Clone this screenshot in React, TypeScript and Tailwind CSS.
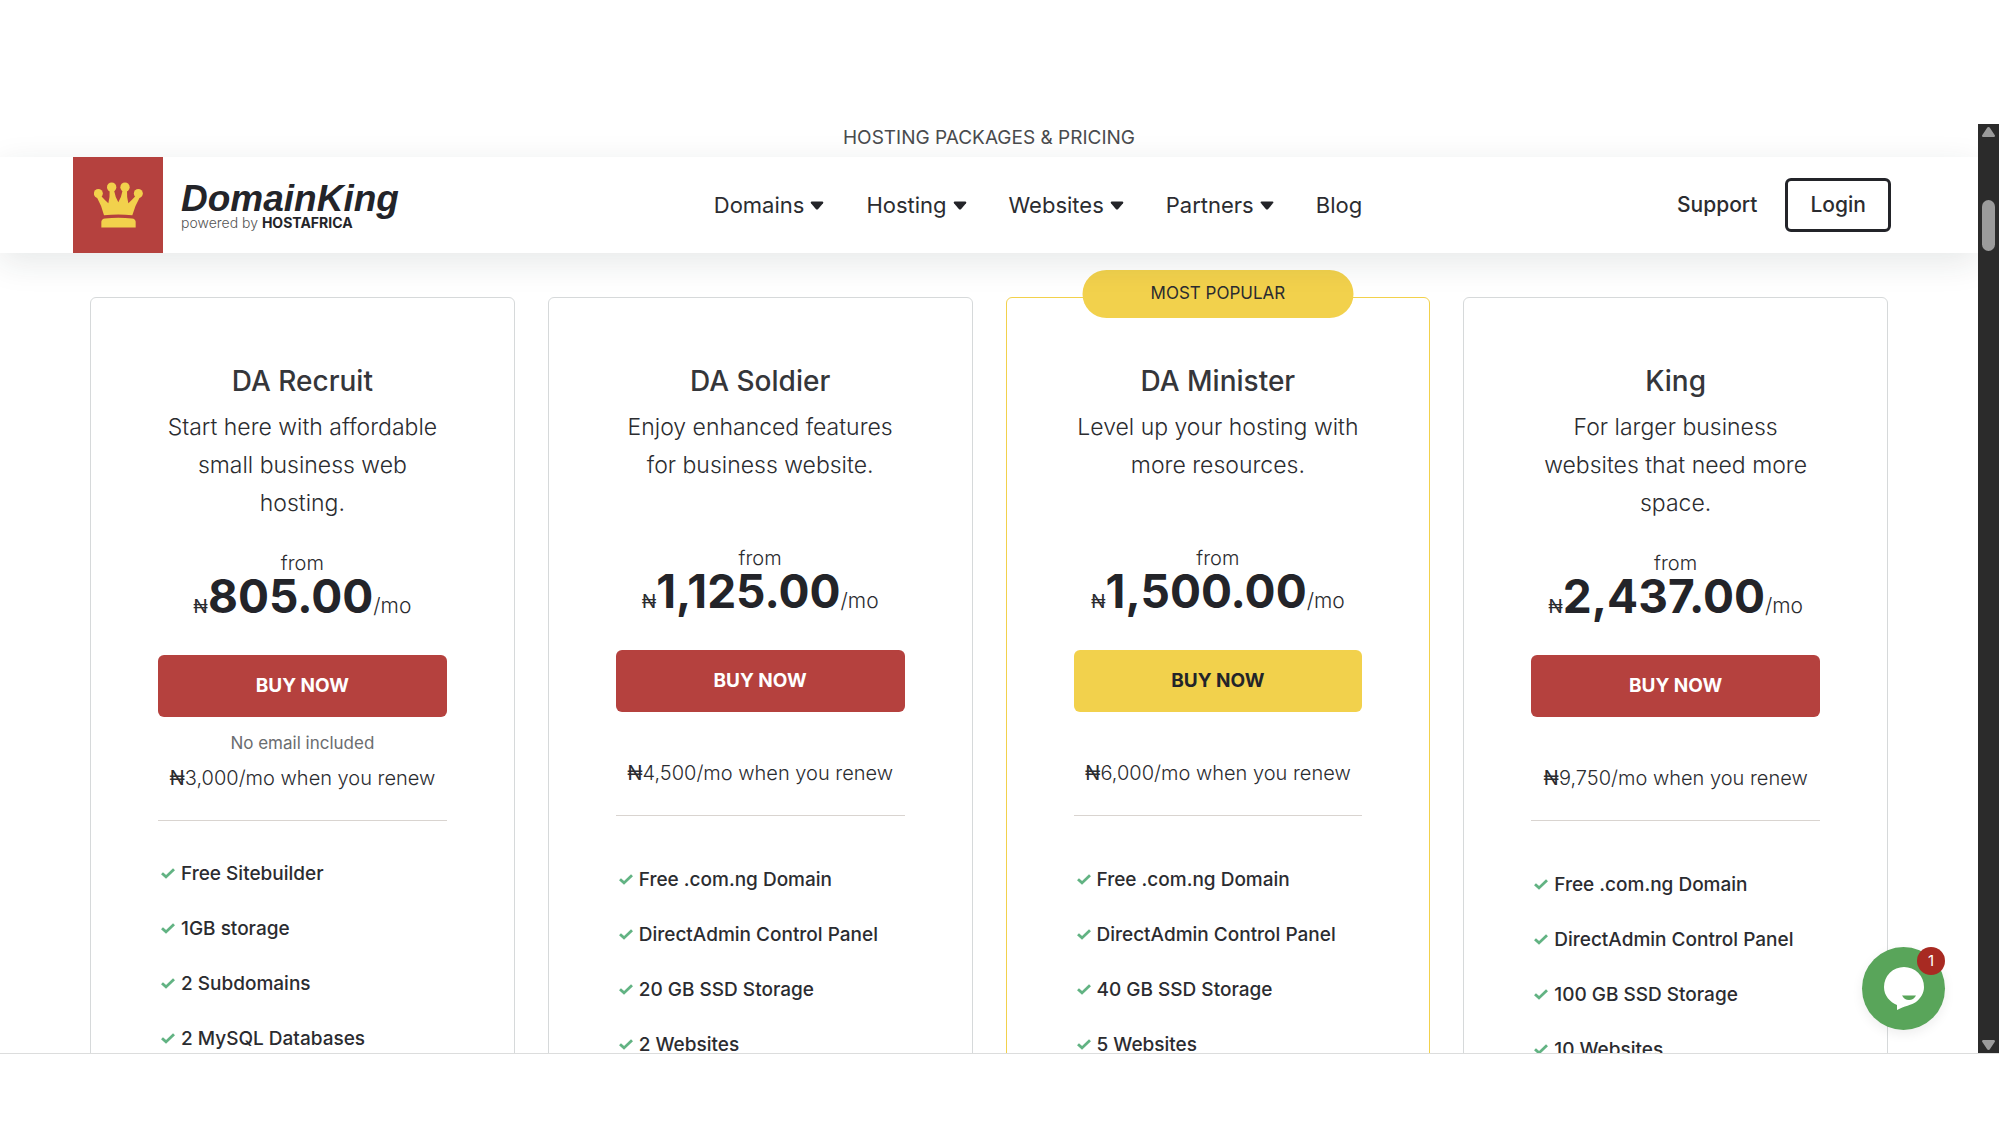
type Plan = {
  name: string;
  blurb: string;
  price: string;
  renew: string;
  note?: string;
  popular?: boolean;
  tall?: boolean;
  features: string[];
};

const plans: Plan[] = [
  {
    name: "DA Recruit",
    blurb: "Start here with affordable small business web hosting.",
    price: "805.00",
    renew: "3,000",
    note: "No email included",
    features: ["Free Sitebuilder", "1GB storage", "2 Subdomains", "2 MySQL Databases"],
  },
  {
    name: "DA Soldier",
    blurb: "Enjoy enhanced features for business website.",
    price: "1,125.00",
    renew: "4,500",
    tall: true,
    features: ["Free .com.ng Domain", "DirectAdmin Control Panel", "20 GB SSD Storage", "2 Websites"],
  },
  {
    name: "DA Minister",
    blurb: "Level up your hosting with more resources.",
    price: "1,500.00",
    renew: "6,000",
    popular: true,
    tall: true,
    features: ["Free .com.ng Domain", "DirectAdmin Control Panel", "40 GB SSD Storage", "5 Websites"],
  },
  {
    name: "King",
    blurb: "For larger business websites that need more space.",
    price: "2,437.00",
    renew: "9,750",
    tall: true,
    features: ["Free .com.ng Domain", "DirectAdmin Control Panel", "100 GB SSD Storage", "10 Websites"],
  },
];

const menu = [
  { label: "Domains", more: true },
  { label: "Hosting", more: true },
  { label: "Websites", more: true },
  { label: "Partners", more: true },
  { label: "Blog", more: false },
];

function Crown() {
  return (
    <svg viewBox="101 216 147 137" className="h-[46px] w-[49px] fill-[#f2d14c]" aria-hidden="true">
      <circle cx="114" cy="250" r="13.5" />
      <circle cx="154" cy="231" r="14" />
      <circle cx="194" cy="231" r="14" />
      <circle cx="234" cy="250" r="13.5" />
      <path d="M108 258 Q124 286 131 315 Q174 311 216 315 Q224 286 240 258 L225 258 Q214 270 204 279 Q199 262 200 240 L187 240 Q183 262 174 276 Q165 262 161 240 L148 240 Q149 262 144 279 Q134 270 123 258 Z" />
      <path d="M123 335 Q124 326 134 325 Q174 321 215 325 Q225 326 226 335 V352 H123 Z" />
    </svg>
  );
}

function Check() {
  return (
    <svg viewBox="0 0 14 11" className="h-[11px] w-[14px] shrink-0" aria-hidden="true">
      <path d="M1 5.2 L5 8.900 L13 1.2" fill="none" stroke="#62b383" strokeWidth="2.8" />
    </svg>
  );
}

function Caret() {
  return (
    <svg viewBox="0 0 14 9" className="h-[9px] w-[14px]" aria-hidden="true">
      <path d="M1.5 0.5 H12.5 Q14 1 13 2.3 L8.2 8 Q7 9 5.8 8 L1 2.3 Q0 1 1.5 0.5 Z" fill="#232429" />
    </svg>
  );
}

function Header() {
  return (
    <header className="relative z-10 flex h-24 items-center justify-between bg-white pr-[87px] pl-[73px] shadow-[0_9px_34px_rgba(30,50,50,0.11)]">
      <a href="#home" className="flex items-center gap-[18px]">
        <span className="flex h-24 w-[90px] items-center justify-center bg-[#b5413e]">
          <Crown />
        </span>
        <span className="flex flex-col">
          <span className="font-['Liberation_Sans',sans-serif] text-[37px] leading-9 font-bold text-[#232429] italic">
            DomainKing
          </span>
          <span className="text-[14px] leading-3 font-light text-[#555]">
            powered by <b className="font-bold text-[#232429]">HOSTAFRICA</b>
          </span>
        </span>
      </a>
      <nav className="flex items-center gap-[42px]">
        {menu.map((item) => (
          <a key={item.label} href={"#" + item.label.toLowerCase()} className="flex items-center gap-1.5 text-[22px] leading-8">
            {item.label}
            {item.more && <Caret />}
          </a>
        ))}
      </nav>
      <div className="flex items-center gap-7">
        <a href="#support" className="text-[21px] leading-8 font-medium">
          Support
        </a>
        <button type="button" className="h-[54px] rounded-md border-[3px] border-[#232429] px-[22px] text-[21px] font-medium">
          Login
        </button>
      </div>
    </header>
  );
}

function PlanCard({ plan }: { plan: Plan }) {
  return (
    <article
      className={
        "relative flex flex-1 flex-col rounded-md border px-[67px] pt-16 text-center " +
        (plan.popular ? "border-[#f2d14c]" : "border-[#d6d9da]")
      }
    >
      {plan.popular && (
        <div className="absolute -top-7 left-1/2 flex h-12 w-[271px] -translate-x-1/2 items-center justify-center rounded-full bg-[#f2d14c] text-[17px]">
          MOST POPULAR
        </div>
      )}
      <h3 className="text-[28px] leading-[38px] font-medium text-[#35363a]">{plan.name}</h3>
      <p className="mt-2 min-h-[109px] text-[23px] leading-[38px] font-light">{plan.blurb}</p>
      <p className="mt-7 text-[20px] leading-[26px] font-light">from</p>
      <p className="flex items-baseline justify-center leading-10">
        <span className="text-[19px]">₦</span>
        <span className="text-[46px] font-bold text-[#232429]">{plan.price}</span>
        <span className="text-[21px] font-light">/mo</span>
      </p>
      <button
        type="button"
        className={
          "mt-7 h-[62px] w-full rounded-md text-[19px] font-bold " +
          (plan.popular ? "bg-[#f2d14c] text-[#232429]" : "bg-[#b5413e] text-white")
        }
      >
        BUY NOW
      </button>
      <p className="mt-3 h-7 text-[17px] leading-7 text-[#6b6d70]">{plan.note}</p>
      <p className="mt-[3px] text-[20px] leading-9 font-light whitespace-nowrap">
        <span className="font-normal">₦</span>
        {plan.renew}/mo when you renew
      </p>
      <hr className="mt-6 border-[#d9d4d0]" />
      <ul className={"flex flex-col text-left " + (plan.tall ? "mt-9" : "mt-[25px]")}>
        {plan.features.map((f) => (
          <li key={f} className="flex h-[55px] items-center gap-1.5 pl-[3px] text-[19px] leading-7 font-medium whitespace-nowrap">
            <Check />
            {f}
          </li>
        ))}
      </ul>
    </article>
  );
}

function ChatButton() {
  return (
    <button
      type="button"
      aria-label="Open chat"
      className="absolute right-[33px] bottom-[23px] z-20 flex size-[83px] items-center justify-center rounded-full bg-[#59a55a] shadow-[0_4px_12px_rgba(0,0,0,0.07)]"
    >
      <svg viewBox="0 0 40 43" className="h-[43px] w-10" aria-hidden="true">
        <path d="M20 0 A20 20 0 0 0 0 20 C0 29 6 35 13 38 L13 43 C20 39 28 38 32 35 C37 31 40 26 40 20 A20 20 0 0 0 20 0 Z" fill="#fff" />
        <path d="M18 28.5 H32 Q29.5 33 25 33 Q20.500 33 18 28.500 Z" fill="#59a55a" />
      </svg>
      <span className="absolute top-0 right-0 flex size-7 items-center justify-center rounded-full bg-[#a82a22] text-[15px] text-white">
        1
      </span>
    </button>
  );
}

function ScrollRail() {
  return (
    <div className="flex w-[21px] shrink-0 flex-col items-center justify-between bg-[#2b2b2b] py-[3px]" aria-hidden="true">
      <div className="flex flex-col items-center gap-[63px]">
        <svg viewBox="0 0 13 10" className="h-[10px] w-[13px] fill-[#9b9b9b]">
          <path d="M6.500 0 Q7.500 0 8 1 L13 8.500 Q13 10 12 10 H1 Q0 10 0 8.500 L5 1 Q5.500 0 6.500 0 Z" />
        </svg>
        <div className="h-[51px] w-[13px] rounded-full bg-[#9b9b9b]" />
      </div>
      <svg viewBox="0 0 13 10" className="h-[10px] w-[13px] fill-[#9b9b9b]">
        <path d="M6.500 10 Q7.500 10 8 9 L13 1.500 Q13 0 12 0 H1 Q0 0 0 1.500 L5 9 Q5.500 10 6.500 10 Z" />
      </svg>
    </div>
  );
}

export default function App() {
  return (
    <div className="flex h-screen flex-col bg-white pt-[124px] pb-[71px] font-['Inter',sans-serif] text-[#2b2c30]">
      <div className="flex min-h-0 flex-1 border-b border-[#dcdddd]">
        <div className="relative min-w-0 flex-1 overflow-hidden">
          <h2 className="h-[33px] text-center text-[19px] leading-7 text-[#4a4b4e]">
            HOSTING PACKAGES &amp; PRICING
          </h2>
          <Header />
          <main className="flex gap-[33px] px-[90px] pt-11">
            {plans.map((plan) => (
              <PlanCard key={plan.name} plan={plan} />
            ))}
          </main>
          <ChatButton />
        </div>
        <ScrollRail />
      </div>
    </div>
  );
}
